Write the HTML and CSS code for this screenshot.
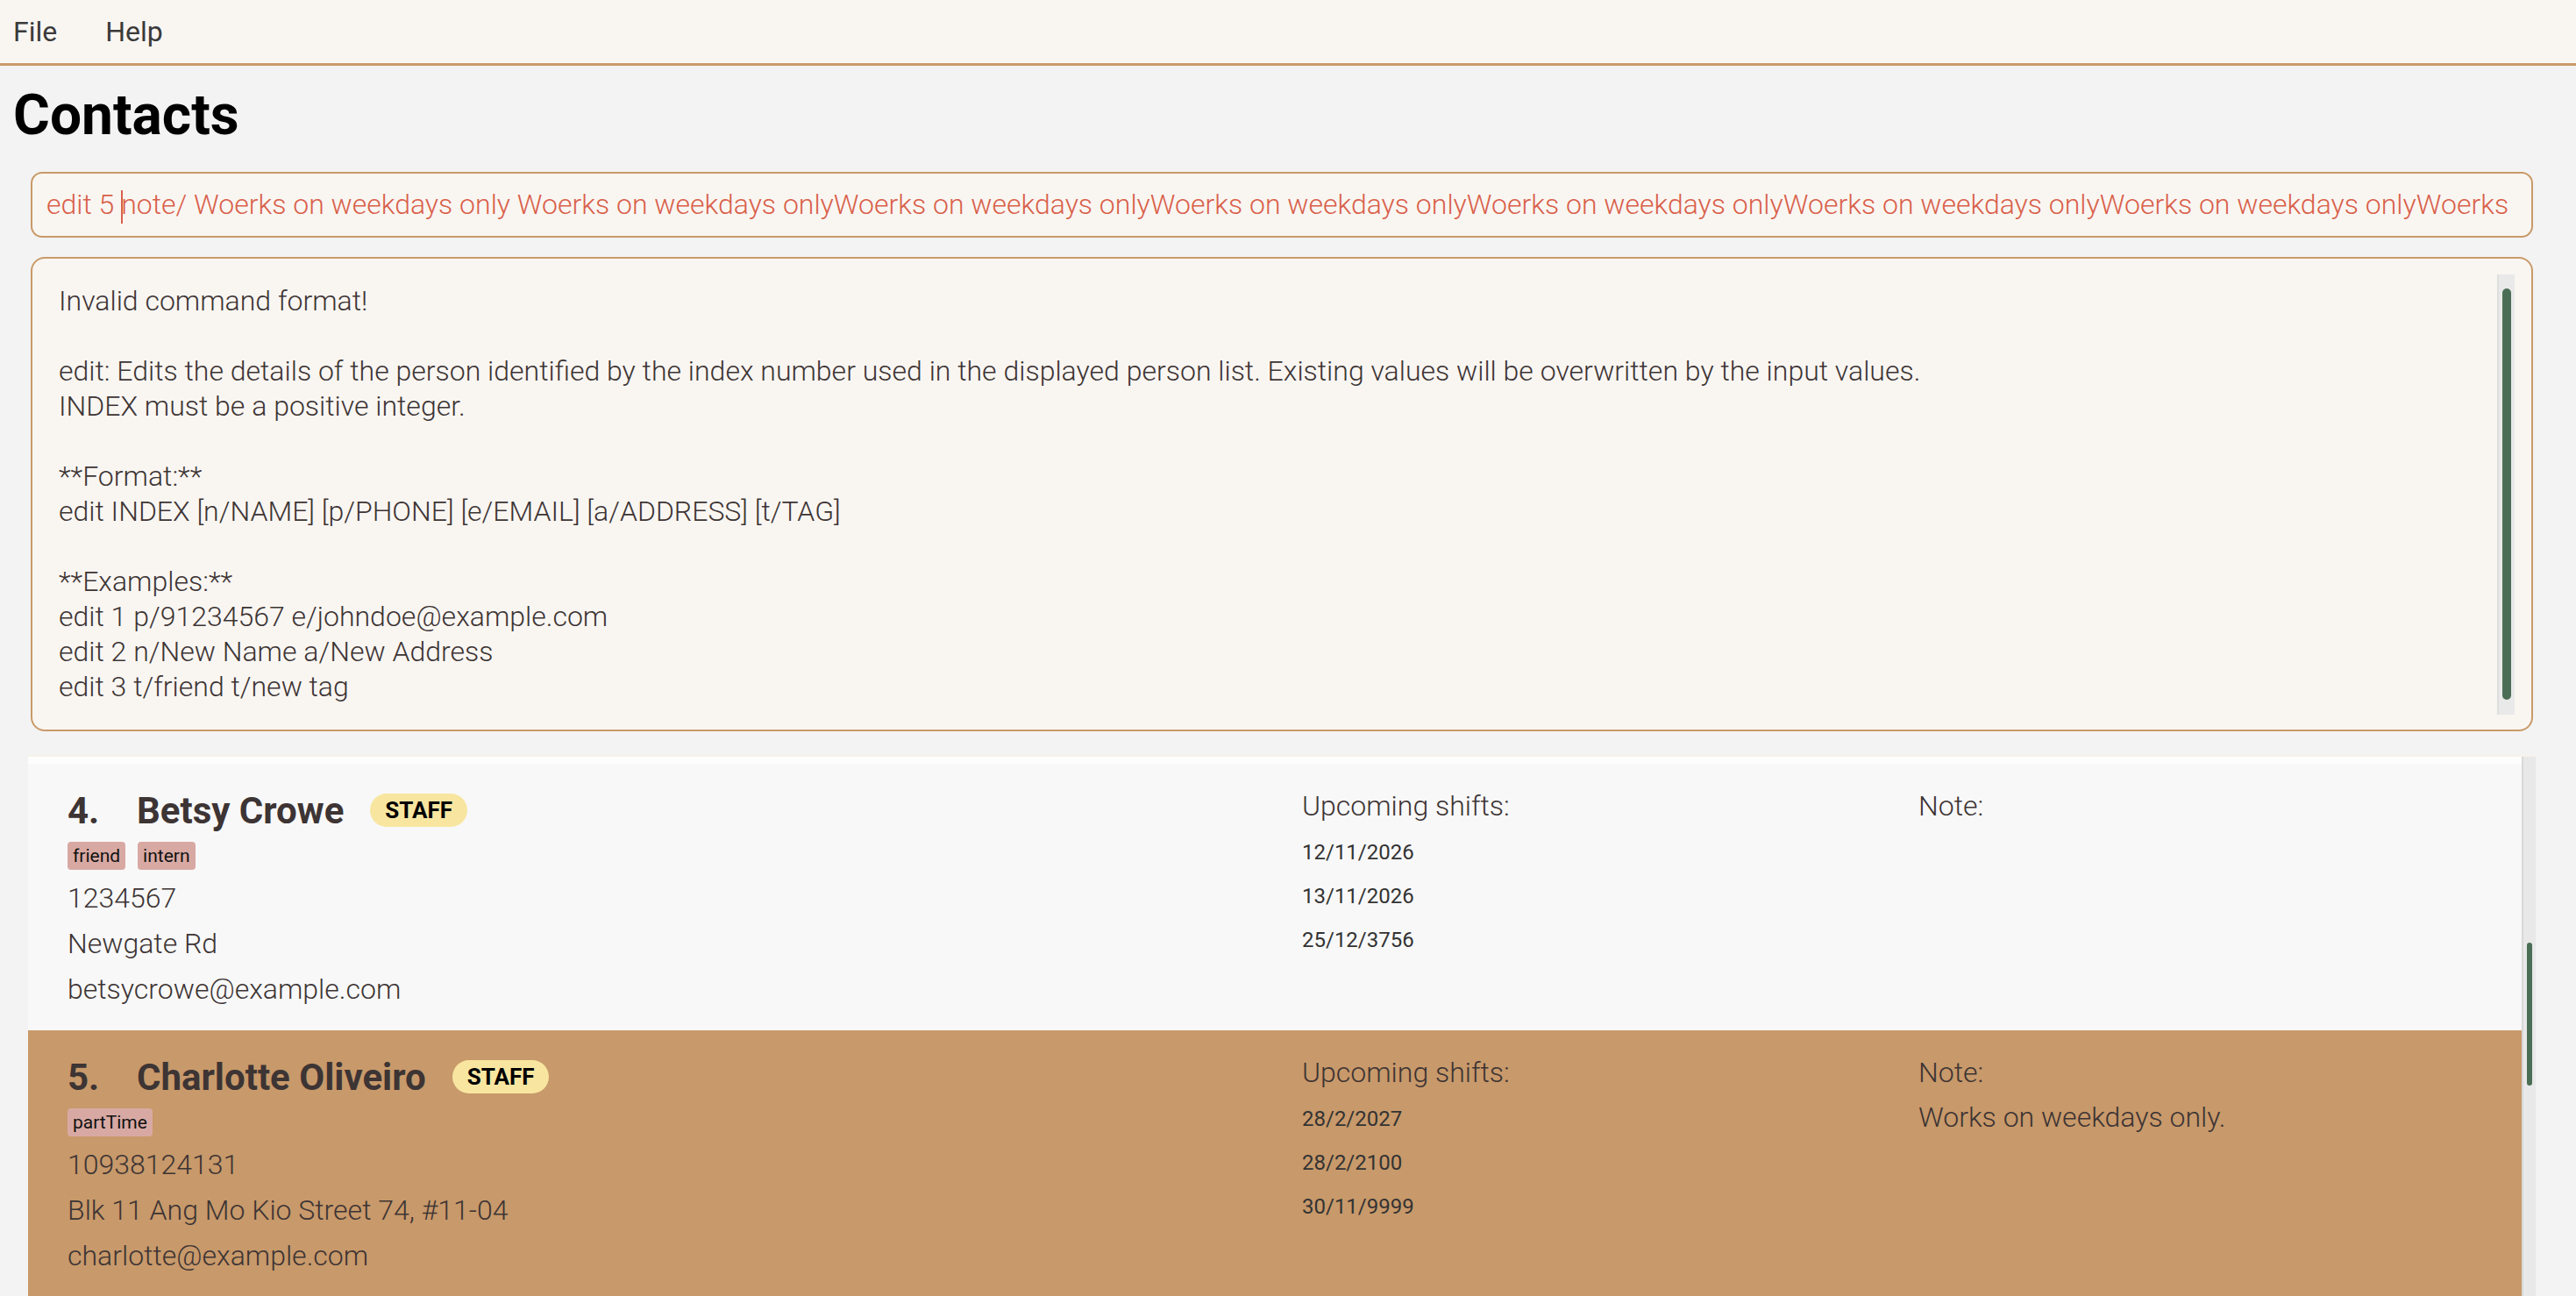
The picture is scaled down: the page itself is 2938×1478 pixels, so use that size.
FILE: index.html
```html
<!DOCTYPE html>
<html lang="en">
<head>
<meta charset="utf-8">
<title>Contacts</title>
<link rel="stylesheet" href="styles.css">
</head>
<body>
<div class="menubar">
  <span class="menu-item">File</span>
  <span class="menu-item">Help</span>
</div>
<h1 class="title">Contacts</h1>
<div class="command">
  <div class="command-text">edit 5 <span class="caret"></span>note/ Woerks on weekdays only Woerks on weekdays onlyWoerks on weekdays onlyWoerks on weekdays onlyWoerks on weekdays onlyWoerks on weekdays onlyWoerks on weekdays onlyWoerks</div>
</div>
<div class="result">
  <div class="result-text">Invalid command format!

edit: Edits the details of the person identified by the index number used in the displayed person list. Existing values will be overwritten by the input values.
INDEX must be a positive integer.

**Format:**
edit INDEX [n/NAME] [p/PHONE] [e/EMAIL] [a/ADDRESS] [t/TAG]

**Examples:**
edit 1 p/91234567 e/johndoe@example.com
edit 2 n/New Name a/New Address
edit 3 t/friend t/new tag</div>
  <div class="vscroll"><div class="vthumb"></div></div>
</div>
<div class="list">
  <div class="cards">
    <div class="strip"></div>
    <div class="card">
      <div class="col-main">
        <div class="head"><span class="idx">4.</span><span class="name">Betsy Crowe</span><span class="badge">STAFF</span></div>
        <div class="tags"><span class="tag">friend</span><span class="tag">intern</span></div>
        <div class="lines">
          <div class="line">1234567</div>
          <div class="line">Newgate Rd</div>
          <div class="line">betsycrowe@example.com</div>
        </div>
      </div>
      <div class="col-shifts">
        <div class="label">Upcoming shifts:</div>
        <div class="dates">
          <div class="date">12/11/2026</div>
          <div class="date">13/11/2026</div>
          <div class="date">25/12/3756</div>
        </div>
      </div>
      <div class="col-note">
        <div class="label">Note:</div>
      </div>
    </div>
    <div class="card selected">
      <div class="col-main">
        <div class="head"><span class="idx">5.</span><span class="name">Charlotte Oliveiro</span><span class="badge">STAFF</span></div>
        <div class="tags"><span class="tag">partTime</span></div>
        <div class="lines">
          <div class="line">10938124131</div>
          <div class="line">Blk 11 Ang Mo Kio Street 74, #11-04</div>
          <div class="line">charlotte@example.com</div>
        </div>
      </div>
      <div class="col-shifts">
        <div class="label">Upcoming shifts:</div>
        <div class="dates">
          <div class="date">28/2/2027</div>
          <div class="date">28/2/2100</div>
          <div class="date">30/11/9999</div>
        </div>
      </div>
      <div class="col-note">
        <div class="label">Note:</div>
        <div class="note-text">Works on weekdays only.</div>
      </div>
    </div>
  </div>
  <div class="list-scroll"><div class="list-thumb"></div></div>
</div>
</body>
</html>
```
FILE: styles.css
```css
html, body {
  margin: 0;
  height: 100%;
  overflow: hidden;
}
body {
  background: #f3f3f3;
  font-family: Roboto, "Liberation Sans", sans-serif;
  color: #3d3434;
}
.menubar {
  height: 72px;
  border-bottom: 3px solid #c99a68;
  background: #f9f6f2;
  display: flex;
  align-items: center;
  padding-left: 15px;
  gap: 55px;
  font-size: 32px;
  color: #3a3a3a;
}
.title {
  margin: 25px 0 0 15px;
  height: 64px;
  line-height: 64px;
  font-size: 64px;
  font-weight: 700;
  color: #000;
}
.command {
  margin: 32px 49px 0 35px;
  height: 75px;
  box-sizing: border-box;
  border: 2px solid #c99a68;
  border-radius: 13px;
  background: #f9f6f2;
  padding: 0 10px 0 16px;
}
.command-text {
  overflow: hidden;
  white-space: nowrap;
  line-height: 71px;
  font-size: 32px;
  font-weight: 300;
  color: #d9604a;
}
.caret {
  display: inline-block;
  width: 0;
  height: 38px;
  border-left: 2px solid #d9604a;
  vertical-align: middle;
  margin-right: -2px;
}
.result {
  margin: 22px 49px 0 35px;
  height: 541px;
  box-sizing: border-box;
  border: 2px solid #c99a68;
  border-radius: 16px;
  background: #f9f6f2;
  display: flex;
}
.result-text {
  flex: 1;
  padding: 28px 0 0 30px;
  font-size: 32px;
  font-weight: 300;
  line-height: 40px;
  white-space: pre;
  overflow: hidden;
}
.vscroll {
  width: 20px;
  margin: 18px 19px 17px 0;
  background: #e9e9e9;
  border-left: 2px solid #dedede;
  box-sizing: border-box;
  display: flex;
  flex-direction: column;
}
.vthumb {
  flex: 1;
  margin: 16px 4px 17px 4px;
  background: #4a6e55;
  border-radius: 5px;
}
.list {
  margin: 27px 46px 0 32px;
  height: 617px;
  display: flex;
  border-top: 2px solid #f6f1e9;
}
.cards {
  flex: 1;
  overflow: hidden;
}
.strip {
  height: 8px;
  background: #fdfdfd;
}
.card {
  display: grid;
  grid-template-columns: 1408px 703px 1fr;
  padding: 28px 0 21px 45px;
  background: #f8f8f8;
}
.card.selected {
  background: #c8996a;
}
.head {
  display: flex;
  align-items: center;
  height: 50px;
}
.idx {
  width: 79px;
  font-size: 42px;
  font-weight: 700;
}
.name {
  font-size: 42px;
  font-weight: 700;
  margin-right: 30px;
}
.badge {
  height: 38px;
  padding: 0 17px;
  border-radius: 19px;
  background: #f8e6a0;
  font-size: 26px;
  font-weight: 700;
  color: #000;
  display: flex;
  align-items: center;
}
.tags {
  display: flex;
  gap: 14px;
  margin-top: 11px;
}
.tag {
  height: 32px;
  line-height: 32px;
  padding: 0 6px;
  background: #d8a9a3;
  border-radius: 4px;
  font-size: 21px;
  color: #111;
}
.lines {
  margin-top: 6px;
}
.line {
  font-size: 32px;
  font-weight: 300;
  line-height: 52px;
}
.label {
  font-size: 32px;
  font-weight: 300;
  line-height: 40px;
}
.dates {
  margin-top: 8px;
}
.date {
  font-size: 24px;
  line-height: 50px;
  color: #333;
}
.note-text {
  margin-top: 5px;
  font-size: 32px;
  font-weight: 300;
  line-height: 52px;
}
.list-scroll {
  width: 16px;
  background: #e8e8e8;
  border-left: 2px solid #d8d8d8;
  box-sizing: border-box;
}
.list-thumb {
  margin: 212px 4px 0 4px;
  height: 163px;
  background: #4a6e55;
  border-radius: 3px;
}
```
